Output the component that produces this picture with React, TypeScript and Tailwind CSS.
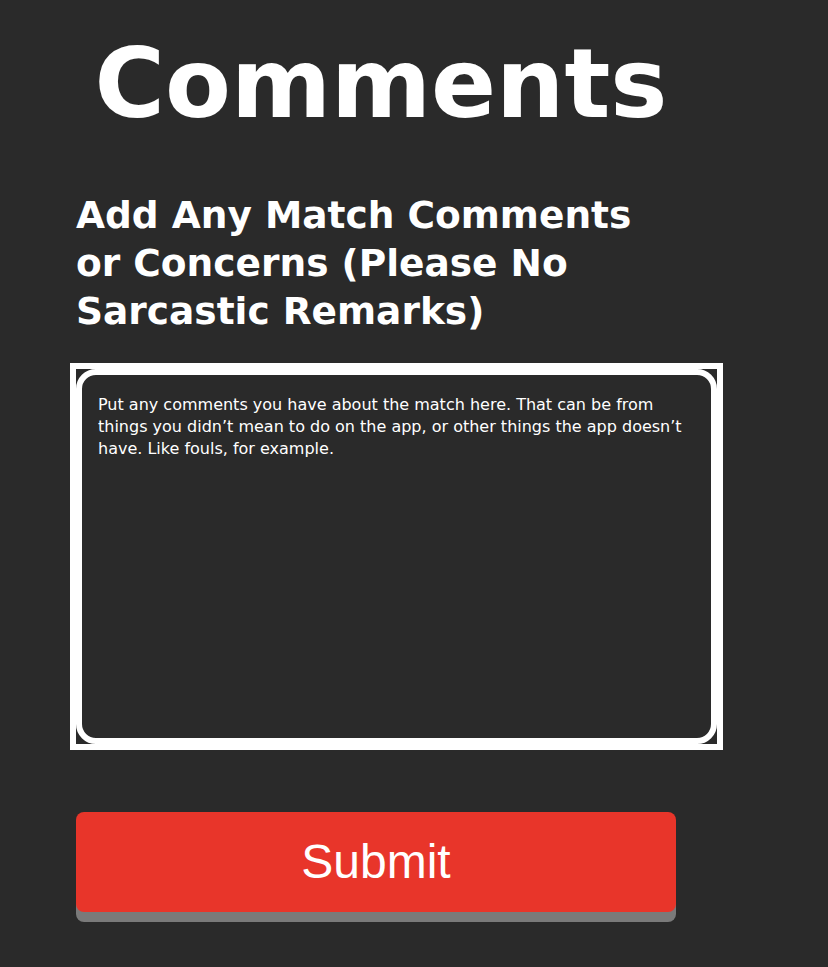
export default function App() {
  return (
    <div className="min-h-[967px] w-full bg-[#2a2a2a] font-['DejaVu_Sans',sans-serif] text-white">
      <div className="w-[600px] ml-[76px] pt-[36px]">
        <h1 className="pl-[10px] text-center text-[96px] font-bold leading-none">Comments</h1>
        <h2 className="mt-[59px] w-[580px] text-[37.5px] font-bold leading-[48px]">
          Add Any Match Comments or Concerns (Please No Sarcastic Remarks)
        </h2>
        <div className="mt-[28px] -ml-[6px] w-[653px] border-[6px] border-white">
          <textarea
            className="block h-[375px] w-full resize-none rounded-[20px] border-[6px] border-white bg-[#2a2a2a] px-[16px] pt-[19px] pb-[16px] text-[16px] leading-[22px] text-white outline-none placeholder:text-white font-['DejaVu_Sans',sans-serif]"
            placeholder="Put any comments you have about the match here. That can be from things you didn’t mean to do on the app, or other things the app doesn’t have. Like fouls, for example."
          />
        </div>
        <button className="mt-[62px] h-[100px] w-[600px] rounded-[8px] bg-[#e8352a] font-['Liberation_Sans',Arial,sans-serif] text-[48px] text-white shadow-[0_10px_0_#7a7a7a]">
          Submit
        </button>
      </div>
    </div>
  );
}
